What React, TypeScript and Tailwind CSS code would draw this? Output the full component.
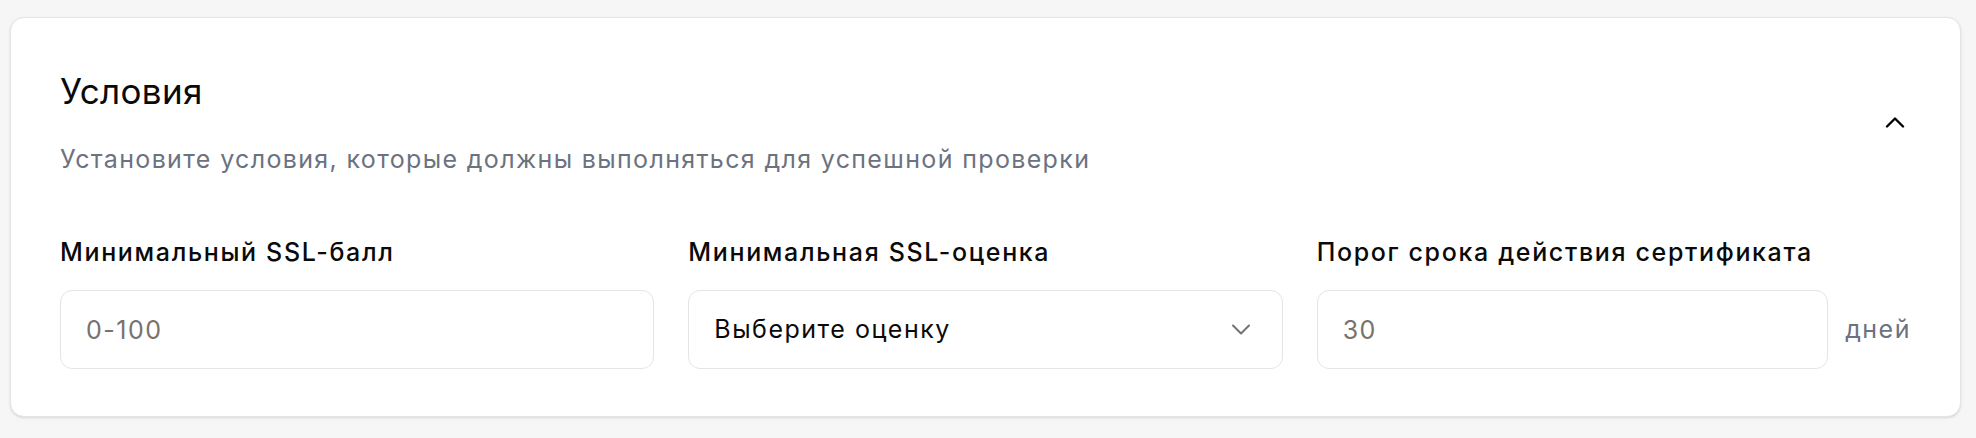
const ChevronUp = () => (
  <svg width="20" height="12" viewBox="0 0 20 12" fill="none" className="text-black">
    <path d="M2 10.5L10 2.5L18 10.5" stroke="currentColor" strokeWidth="2.4" strokeLinecap="round" strokeLinejoin="round" />
  </svg>
);

const ChevronDown = () => (
  <svg width="20" height="12" viewBox="0 0 20 12" fill="none" className="text-[#737373]">
    <path d="M2 1.5L10 9.5L18 1.5" stroke="currentColor" strokeWidth="2" strokeLinecap="round" strokeLinejoin="round" />
  </svg>
);

export default function App() {
  return (
    <div className="h-[438px] bg-[#f6f6f7] pl-[10px] pr-[15px] pt-[17px] font-['Inter',sans-serif]">
      <div className="rounded-[14px] border border-[#e5e5e5] bg-white px-[49px] pt-[49px] pb-[47px] shadow-sm">
        <div className="flex items-center justify-between">
          <div>
            <h2 className="text-[35px] leading-[49px] font-normal tracking-[0.01em] text-[#0a0a0a]">Условия</h2>
            <p className="mt-[26px] text-[25px] leading-[35px] tracking-[0.054em] text-[#6b7280]">
              Установите условия, которые должны выполняться для успешной проверки
            </p>
          </div>
          <button className="flex h-[40px] w-[32px] items-center justify-center">
            <ChevronUp />
          </button>
        </div>

        <div className="mt-[58px] grid grid-cols-3 gap-[34px]">
          <div>
            <label className="block text-[25px] leading-[35px] font-medium tracking-[0.066em] text-[#0a0a0a]">Минимальный SSL-балл</label>
            <input
              placeholder="0-100"
              className="mt-[20px] h-[79px] w-full rounded-[12px] border border-[#e5e5e5] bg-white px-[25px] text-[25px] tracking-[0.06em] text-[#0a0a0a] outline-none placeholder:text-[#78716c]"
            />
          </div>
          <div>
            <label className="block text-[25px] leading-[35px] font-medium tracking-[0.066em] text-[#0a0a0a]">Минимальная SSL-оценка</label>
            <div className="mt-[20px] flex h-[79px] w-full items-center justify-between rounded-[12px] border border-[#e5e5e5] bg-white pl-[25px] pr-[31px] text-[25px] tracking-[0.06em] text-[#0a0a0a]">
              <span>Выберите оценку</span>
              <ChevronDown />
            </div>
          </div>
          <div>
            <label className="block text-[25px] leading-[35px] font-medium tracking-[0.066em] text-[#0a0a0a]">Порог срока действия сертификата</label>
            <div className="mt-[20px] flex items-center gap-[17px]">
              <input
                placeholder="30"
                className="h-[79px] min-w-0 flex-1 rounded-[12px] border border-[#e5e5e5] bg-white px-[25px] text-[25px] tracking-[0.06em] text-[#0a0a0a] outline-none placeholder:text-[#78716c]"
              />
              <span className="text-[25px] tracking-[0.06em] text-[#6b7280]">дней</span>
            </div>
          </div>
        </div>
      </div>
    </div>
  );
}
